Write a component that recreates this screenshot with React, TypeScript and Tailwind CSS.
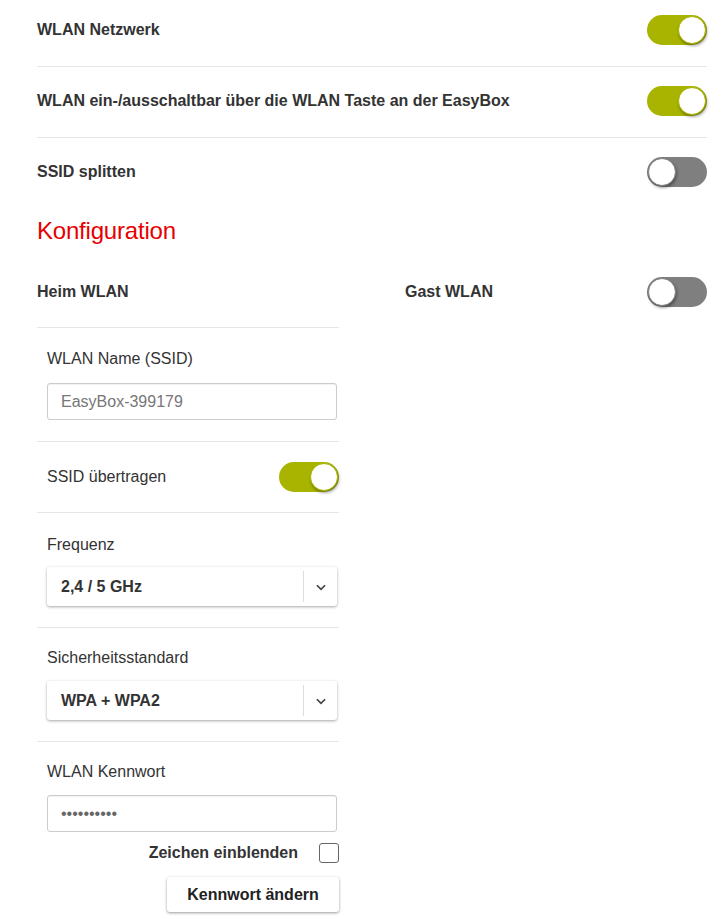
import { useState } from 'react'

function Toggle({ on, onClick }: { on: boolean; onClick?: () => void }) {
  return (
    <button
      type="button"
      role="switch"
      aria-checked={on}
      onClick={onClick}
      className={`relative h-[30px] w-[60px] shrink-0 rounded-full ${on ? 'bg-[#a8b400]' : 'bg-[#7f7f7f]'}`}
    >
      <span
        className={`absolute top-px h-[28px] w-[28px] rounded-full border bg-white shadow-[1px_2px_3px_rgba(0,0,0,0.35)] ${
          on ? 'right-px border-[#a8b400]' : 'left-px border-[#7f7f7f]'
        }`}
      />
    </button>
  )
}

function Divider() {
  return <div className="h-px bg-[#e6e6e6]" />
}

function Chevron() {
  return (
    <svg className="h-[14px] w-[14px] text-[#444]" viewBox="0 0 12 12" fill="none" stroke="currentColor" strokeWidth={1.5} aria-hidden="true">
      <path d="M2.5 4.5 6 8l3.5-3.5" />
    </svg>
  )
}

function Select({ value }: { value: string }) {
  return (
    <div className="flex h-[39px] items-center rounded-[3px] bg-white shadow-[0_1px_3px_rgba(0,0,0,0.35)]">
      <span className="flex-1 pl-[14px] text-[16px] font-bold text-[#333]">{value}</span>
      <span className="h-[31px] w-px bg-[#ddd]" />
      <span className="flex w-[33px] justify-center">
        <Chevron />
      </span>
    </div>
  )
}

export default function App() {
  const [net, setNet] = useState(true)
  const [btn, setBtn] = useState(true)
  const [split, setSplit] = useState(false)
  const [guest, setGuest] = useState(false)
  const [broadcast, setBroadcast] = useState(true)
  const [show, setShow] = useState(false)

  return (
    <div className="min-h-[919px] bg-white pl-[37px] pr-[20px] text-[#333] [font-family:'Liberation_Sans',Arial,sans-serif]">
      <div className="flex items-center justify-between pt-[15px] pb-[21px]">
        <span className="text-[16px] font-bold">WLAN Netzwerk</span>
        <Toggle on={net} onClick={() => setNet(!net)} />
      </div>
      <Divider />
      <div className="flex items-center justify-between pt-[19px] pb-[21px]">
        <span className="text-[16px] font-bold">WLAN ein-/ausschaltbar über die WLAN Taste an der EasyBox</span>
        <Toggle on={btn} onClick={() => setBtn(!btn)} />
      </div>
      <Divider />
      <div className="flex items-center justify-between pt-[19px]">
        <span className="text-[16px] font-bold">SSID splitten</span>
        <Toggle on={split} onClick={() => setSplit(!split)} />
      </div>

      <h2 className="mt-[30px] text-[24px] leading-[28px] tracking-[-0.2px] text-[#e60000]">Konfiguration</h2>

      <div className="mt-[32px] flex">
        <div className="w-[302px]">
          <div className="flex h-[30px] items-center">
            <span className="text-[16px] font-bold">Heim WLAN</span>
          </div>
          <div className="mt-[20px]">
            <Divider />
          </div>

          <div className="pl-[10px] pr-[2px] pt-[22px] pb-[21px]">
            <div className="text-[16px] leading-[18px]">WLAN Name (SSID)</div>
            <input
              placeholder="EasyBox-399179"
              className="mt-[15px] h-[37px] w-full rounded-[3px] border border-[#ccc] px-[13px] text-[16px] text-[#333] shadow-[inset_0_1px_1px_rgba(0,0,0,0.06)] outline-none placeholder:text-[#777]"
            />
          </div>
          <Divider />

          <div className="flex items-center justify-between pl-[10px] pt-[20px] pb-[20px]">
            <span className="text-[16px]">SSID übertragen</span>
            <Toggle on={broadcast} onClick={() => setBroadcast(!broadcast)} />
          </div>
          <Divider />

          <div className="pl-[10px] pr-[2px] pt-[23px] pb-[21px]">
            <div className="text-[16px] leading-[18px]">Frequenz</div>
            <div className="mt-[13px]">
              <Select value="2,4 / 5 GHz" />
            </div>
          </div>
          <Divider />

          <div className="pl-[10px] pr-[2px] pt-[21px] pb-[21px]">
            <div className="text-[16px] leading-[18px]">Sicherheitsstandard</div>
            <div className="mt-[14px]">
              <Select value="WPA + WPA2" />
            </div>
          </div>
          <Divider />

          <div className="pl-[10px] pt-[21px]">
            <div className="text-[16px] leading-[18px]">WLAN Kennwort</div>
            <div className="pr-[2px]">
              <input
                type="password"
                defaultValue="abcdefghij"
                className="mt-[14px] h-[37px] w-full rounded-[3px] border border-[#ccc] px-[13px] text-[16px] text-[#666] shadow-[inset_0_1px_1px_rgba(0,0,0,0.06)] outline-none"
              />
            </div>
            <div className="mt-[11px] flex h-[20px] items-center justify-end gap-[21px]">
              <span className="text-[16px] leading-[20px] font-bold">Zeichen einblenden</span>
              <button
                type="button"
                aria-pressed={show}
                onClick={() => setShow(!show)}
                className="h-[20px] w-[20px] rounded-[3px] border border-[#666] bg-white"
              />
            </div>
            <div className="mt-[14px] flex justify-end">
              <button
                type="button"
                className="h-[35px] w-[172px] rounded-[3px] bg-white text-[16px] font-bold text-[#222] shadow-[0_1px_3px_rgba(0,0,0,0.4)]"
              >
                Kennwort ändern
              </button>
            </div>
          </div>
        </div>

        <div className="ml-[66px] flex h-[30px] flex-1 items-center justify-between">
          <span className="text-[16px] font-bold">Gast WLAN</span>
          <Toggle on={guest} onClick={() => setGuest(!guest)} />
        </div>
      </div>
    </div>
  )
}
